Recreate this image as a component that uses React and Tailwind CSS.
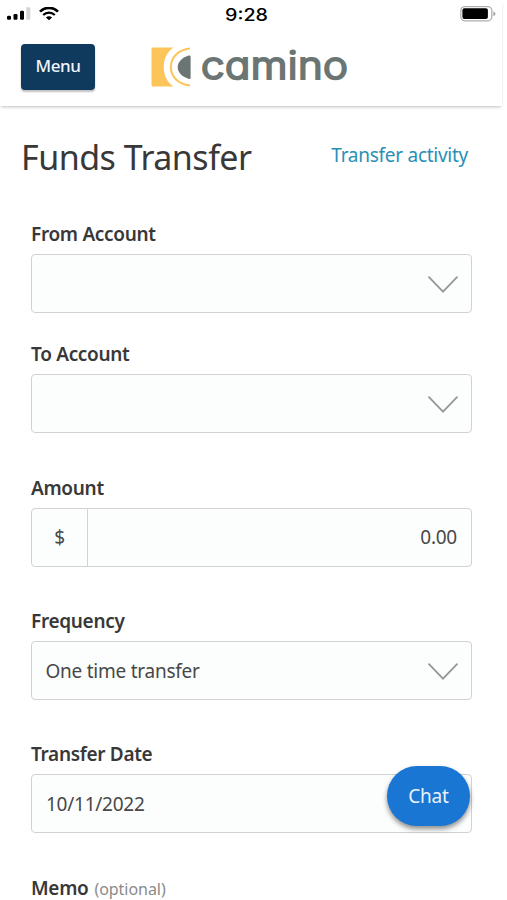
import React from 'react';

function StatusBar() {
  return (
    <div className="flex h-7 items-center justify-between pl-[7px] pr-[6px]">
      <div className="flex flex-1 items-center gap-[8px]">
        <svg className="h-[14px] w-6" viewBox="0 0 24 14">
          <rect x="0" y="8.8" width="4" height="4" rx="1.2" fill="#000" />
          <rect x="6.5" y="7" width="4" height="5.8" rx="1.2" fill="#000" />
          <rect x="13" y="3.8" width="4" height="9" rx="1.2" fill="#000" />
          <rect x="19.3" y="0.3" width="4" height="12.5" rx="1" fill="#d4d4d4" />
        </svg>
        <svg className="h-[14px] w-5" viewBox="0 0 20 14" fill="none" stroke="#000">
          <path d="M1 4.6 C6 -0.4 14 -0.4 19 4.6" strokeWidth="2.7" />
          <path d="M4.2 8 C7.6 4.8 12.4 4.8 15.8 8" strokeWidth="2.4" />
          <path d="M6.9 10.4 C8.6 8.7 11.4 8.7 13.1 10.4 L10 13.2 Z" fill="#000" stroke="none" />
        </svg>
      </div>
      <span className="mr-[9px] mt-px origin-center scale-x-[1.16] font-['Inter','Liberation_Sans',sans-serif] text-[17px] font-medium leading-7 text-black">9:28</span>
      <div className="flex flex-1 justify-end">
        <svg className="h-4 w-[36px]" viewBox="0 0 36 16">
          <rect x="0.8" y="0.6" width="31" height="14.2" rx="4" fill="#fff" stroke="#b0b0b0" strokeWidth="1.3" />
          <rect x="2.4" y="2.3" width="25.5" height="10.8" rx="2" fill="#000" />
          <path d="M33.3 5.4 q2.2 0.6 2.2 2.4 t-2.2 2.4 z" fill="#a6a6a6" />
        </svg>
      </div>
    </div>
  );
}

function Logo() {
  return (
    <div className="flex h-[40px] items-center">
      <svg className="h-10 w-10" viewBox="0 0 40 40">
        <path d="M2 0.5 H22.5 C9.5 9 9.5 31 22.5 39.5 H2 Q0.5 39.5 0.5 38 V2 Q0.5 0.5 2 0.5 Z" fill="#fcc559" />
        <path d="M39 1.6 C13.5 4 13.5 36 39 38.4" fill="none" stroke="#fcc559" strokeWidth="2" />
        <path d="M39.6 9.5 V31 Q39.6 32.3 37.8 31.9 C23 27.5 23 13 37.8 8.6 Q39.6 8.2 39.6 9.5 Z" fill="#6b7674" />
      </svg>
      <span className="-mt-[5px] ml-[10px] origin-left scale-x-[1.105] font-['Inter','Liberation_Sans',sans-serif] text-[38px] font-light leading-10 tracking-[0.4px] text-[#6b7674] [-webkit-text-stroke:2.1px_#6b7674] [font-feature-settings:'cv11'] [stroke-linejoin:round]">camino</span>
    </div>
  );
}

function Chevron() {
  return (
    <svg className="mt-[2px] h-[18px] w-[30px]" viewBox="0 0 30 18" fill="none" stroke="#969696" strokeWidth="1.8">
      <path d="M1 1.2 L15 15.6 L29 1.2" strokeLinecap="round" />
    </svg>
  );
}

function Field({ label, hint, children }) {
  return (
    <div>
      <label className="block h-7 text-[19px] font-semibold leading-7 tracking-[-0.32px] text-[#383838]">
        {label}
        {hint && <span className="ml-[6px] text-[16px] font-normal tracking-[-0.05px] text-[#8a8a8a]">{hint}</span>}
      </label>
      {children && (
        <div className="mt-[6px] flex h-[59px] w-[441px] items-center rounded-[4px] border-[1.5px] border-[#d2d2d2] bg-[#fcfefd] text-[19px] tracking-[-0.25px] text-[#484848]">
          {children}
        </div>
      )}
    </div>
  );
}

function Select({ value }) {
  return (
    <div className="flex flex-1 items-center justify-between pl-[13.5px] pr-[13px] pt-px">
      <span>{value}</span>
      <Chevron />
    </div>
  );
}

export default function App() {
  return (
    <div className="relative h-[900px] w-[507px] overflow-hidden bg-white font-['Noto_Sans',sans-serif]">
      <header className="h-[106px] w-[502px] bg-white shadow-[0_2px_3px_-1px_rgba(0,0,0,0.25)]">
        <StatusBar />
        <div className="flex items-start pl-[21px] pt-4">
          <button className="h-[46px] w-[74px] rounded-[4px] bg-[#0f3a5d] pb-[3px] text-[17px] font-medium tracking-[-0.45px] text-[#eef5fa] shadow-[0_2px_2px_rgba(0,0,0,0.25)]">
            Menu
          </button>
          <div className="ml-[56px] mt-[3px]">
            <Logo />
          </div>
        </div>
      </header>

      <main>
        <div className="flex h-[114px] justify-between pl-[21px] pr-[39px] pt-[27px]">
          <h1 className="text-[34px] leading-[48px] tracking-[-0.5px] text-[#383838]">Funds Transfer</h1>
          <a className="pt-[8px] text-[19px] leading-7 tracking-[-0.27px] text-[#2a8fb5]">Transfer activity</a>
        </div>

        <form className="pl-[31px]">
          <div className="flex flex-col gap-[27px]">
            <Field label="From Account"><Select value="" /></Field>
            <Field label="To Account"><Select value="" /></Field>
          </div>
          <div className="flex flex-col gap-[40.4px] pt-[40.6px]">
            <Field label="Amount">
              <span className="flex h-full w-[56px] items-center justify-center border-r-[1.5px] border-[#d2d2d2]">$</span>
              <span className="flex-1 pr-[14px] text-right">0.00</span>
            </Field>
            <Field label="Frequency"><Select value="One time transfer" /></Field>
            <Field label="Transfer Date"><span className="pl-[14px]">10/11/2022</span></Field>
            <Field label="Memo" hint="(optional)" />
          </div>
        </form>
      </main>

      <button className="absolute left-[387px] top-[766px] h-[60px] w-[83px] rounded-[30px] bg-[#1976d2] text-[19px] tracking-[-0.2px] text-[#e8f2fc] shadow-[0_3px_5px_rgba(0,0,0,0.45)]">
        Chat
      </button>
    </div>
  );
}
